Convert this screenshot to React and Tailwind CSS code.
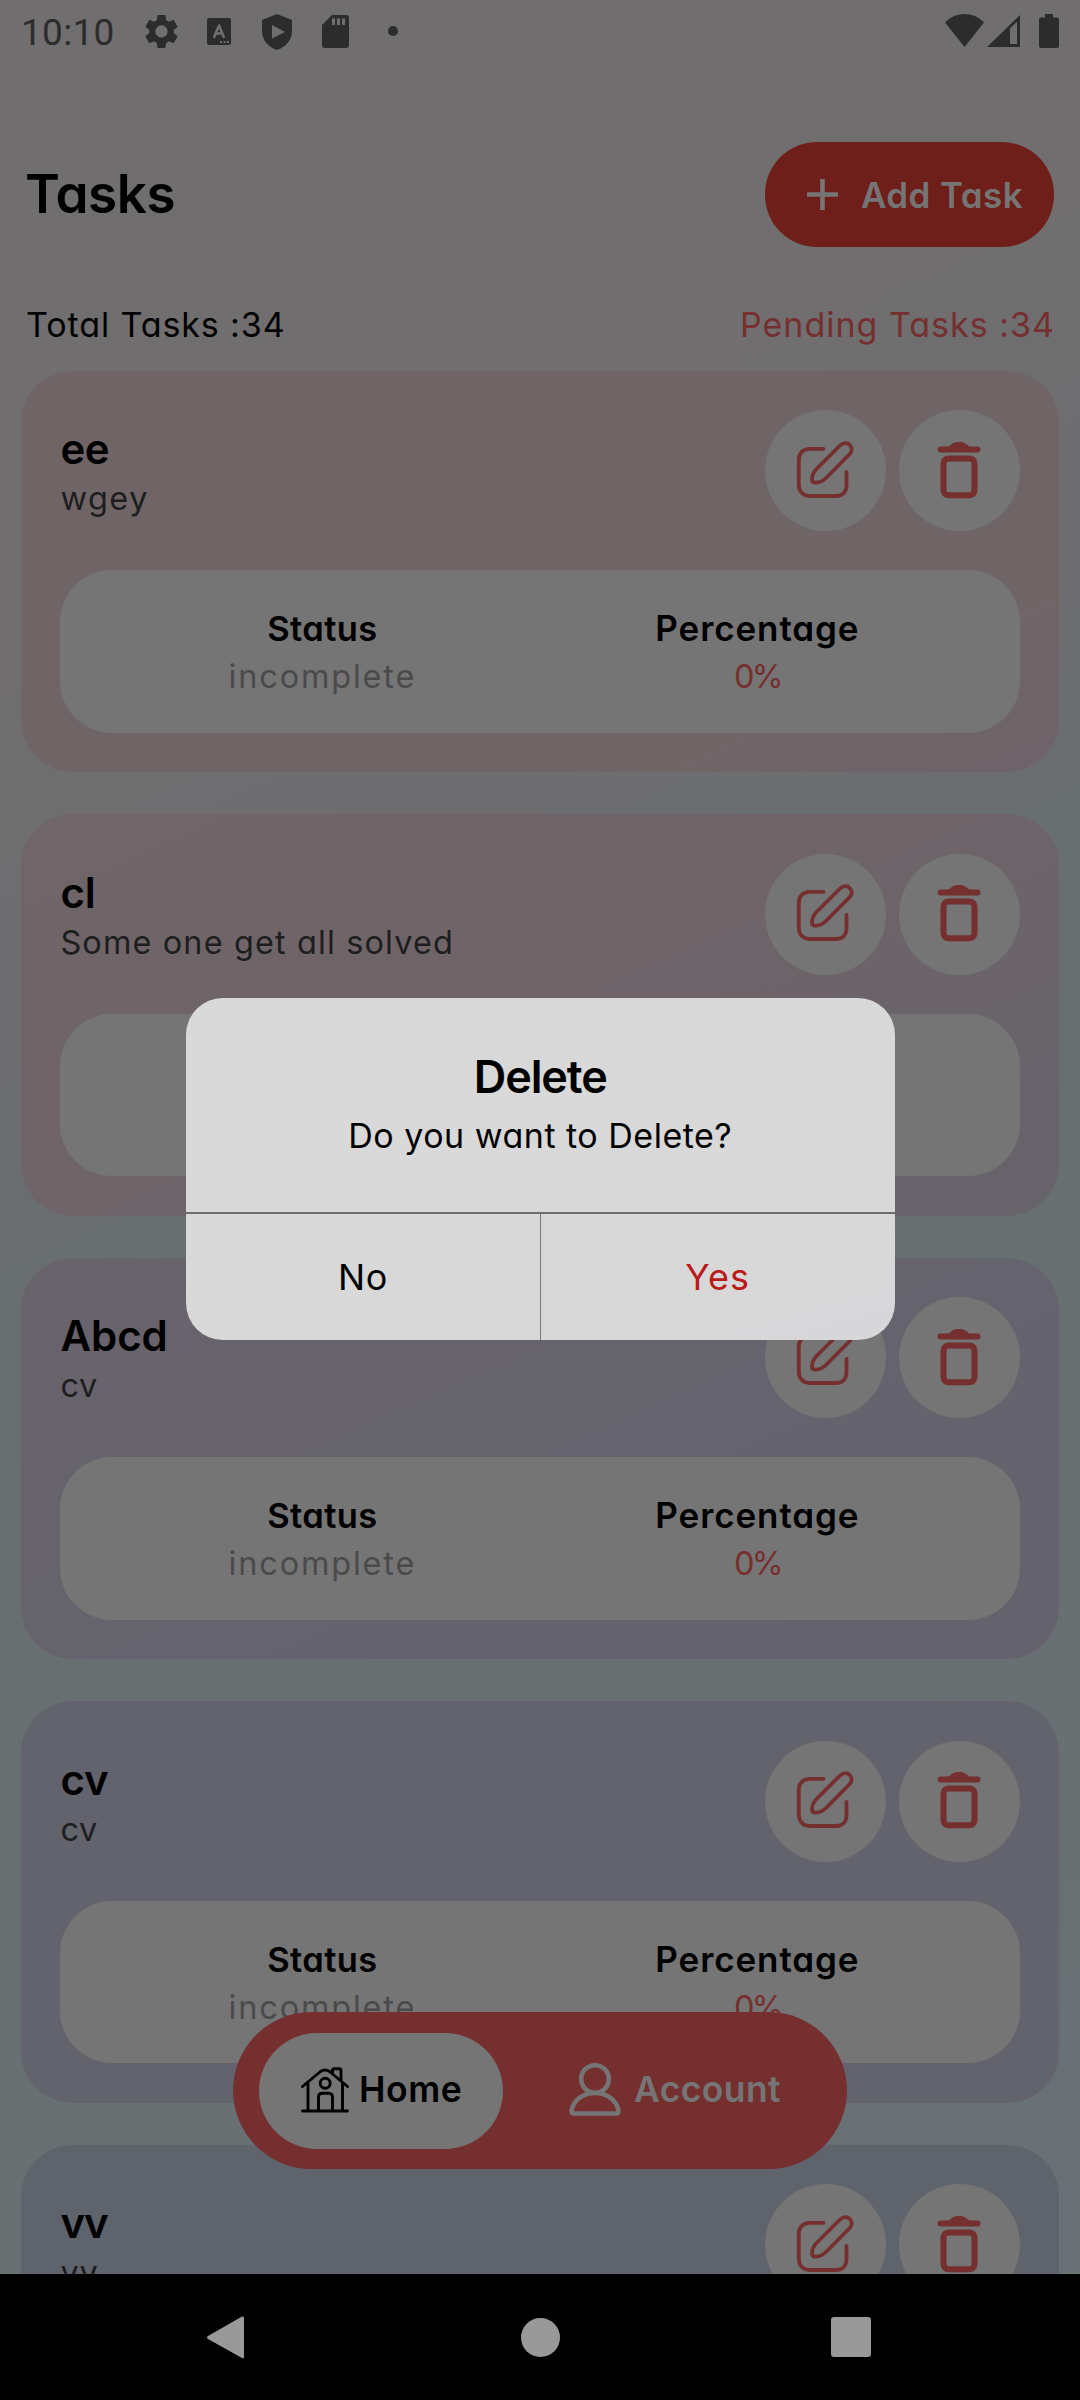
const INTER = "font-[Inter,sans-serif] [font-feature-settings:'cv11'] font-[370]";

const tasks = [
  { title: "ee", note: "wgey", bg: "bg-[linear-gradient(156deg,#706566_0%,#706566_75%,#6e6369_100%)]", ts: "tracking-[-0.5px]", ns: "tracking-[1.5px]" },
  { title: "cl", note: "Some one get all solved", bg: "bg-[linear-gradient(156deg,#706568_0%,#6e6469_50%,#69636b_80%,#67636b_100%)]", ts: "tracking-[0px]", ns: "tracking-[1.1px]" },
  { title: "Abcd", note: "cv", bg: "bg-[linear-gradient(156deg,#69636b_0%,#65636d_50%,#64626c_100%)]", ts: "tracking-[0px]", ns: "tracking-[0.8px]" },
  { title: "cv", note: "cv", bg: "bg-[#63636e]", ts: "tracking-[0px]", ns: "tracking-[0.8px]" },
  { title: "vv", note: "vv", bg: "bg-[#5f636c]", ts: "tracking-[-1px]", ns: "tracking-[0.8px]" },
];

function EditIcon() {
  return (
    <svg width="60" height="60" viewBox="0 0 60 60" fill="none" stroke="#752f2f" strokeWidth="3.8" strokeLinecap="round" strokeLinejoin="round">
      <path d="M28.500 8.800H14.500C8 8.800 3.800 13.500 3.800 19.500V45C3.800 51 8 56 14.500 56H41C48 56 51.500 51.500 51.500 45V32" />
      <path d="M44.500 6C48 2.300 52.500 2.600 54.800 5C57.400 7.800 57.200 11.500 54.500 14.300L31.500 37.500C28 41 23.500 43 19.500 42.500C17.700 42.300 17 41.200 17 39.500C17 35.500 18.500 32 21.500 29Z" />
    </svg>
  );
}

function TrashIcon() {
  return (
    <svg width="44" height="58" viewBox="0 0 44 58" fill="none" stroke="#752f2f">
      <path d="M3.500 8.500H40.500" strokeWidth="6" strokeLinecap="round" />
      <path d="M11 6.500C14 3 17 1 22 1S30 3 33 6.500L34 7H10Z" fill="#752f2f" stroke="none" />
      <rect x="6.500" y="17.500" width="31" height="36.800" rx="5" strokeWidth="6" />
    </svg>
  );
}

function TaskCard({ task }) {
  return (
    <div className={`h-[401.6px] shrink-0 rounded-[52px] px-[39.4px] pt-[39.4px] ${task.bg}`}>
      <div className="flex h-[121px] items-start justify-between">
        <div className="pt-[14px]">
          <div className={`h-[50px] text-[42px] leading-[50px] font-semibold text-black ${task.ts}`}>{task.title}</div>
          <div className={`mt-[2px] h-[46px] text-[32.5px] leading-[46px] text-[#1e1e1e] ${task.ns}`}>{task.note}</div>
        </div>
        <div className="flex gap-[13px]">
          <div className="flex size-[121px] items-center justify-center rounded-full bg-[#757575] pb-[2px]"><EditIcon /></div>
          <div className="flex size-[121px] items-center justify-center rounded-full bg-[#757575] pb-[2px]"><TrashIcon /></div>
        </div>
      </div>
      <div className="mt-[39px] flex h-[162.7px] rounded-[52px] bg-[#757575] pt-[34px]">
        <div className="ml-[142px] w-[240px] text-center">
          <div className="h-[49px] text-[34.5px] leading-[49px] font-semibold tracking-[0.4px] text-black">Status</div>
          <div className="h-[46px] text-[32.5px] leading-[48px] tracking-[1.8px] text-[#4a4a4a]">incomplete</div>
        </div>
        <div className="ml-[195px] w-[240px] text-center">
          <div className="h-[49px] text-[35px] leading-[49px] font-semibold tracking-[0.9px] text-black">Percentage</div>
          <div className="h-[46px] text-[32.5px] leading-[48px] tracking-[-2.8px] text-[#752f2f]">0%</div>
        </div>
      </div>
    </div>
  );
}

function StatusBar() {
  return (
    <div className="flex h-[63px] shrink-0 items-start justify-between px-[21px] text-[#2c2c2c]">
      <div className="flex items-start">
        <span className="mt-[11px] w-[119.5px] font-[Roboto,sans-serif] text-[37px] leading-[44px] tracking-[0.3px]">10:10</span>
        <svg className="mt-[11px]" width="41" height="41" viewBox="0 0 24 24" fill="currentColor">
          <path d="M19.140 12.940c.04-.3.060-.610.060-.940s-.020-.640-.070-.940l2.030-1.580a.49.49 0 0 0 .120-.610l-1.920-3.320a.49.49 0 0 0-.590-.220l-2.390.960c-.5-.380-1.030-.7-1.620-.940l-.360-2.540a.48.48 0 0 0-.480-.410h-3.840a.47.47 0 0 0-.470.410l-.360 2.540c-.590.240-1.130.570-1.620.940l-2.390-.960a.48.48 0 0 0-.590.220L2.740 8.870a.47.47 0 0 0 .120.610l2.030 1.580c-.05.300-.09.630-.09.940s.02.640.07.940l-2.030 1.580a.49.49 0 0 0-.120.610l1.920 3.320c.12.220.37.290.59.220l2.390-.96c.5.380 1.030.7 1.620.94l.36 2.540c.05.240.24.410.48.410h3.840c.24 0 .44-.17.47-.41l.36-2.540c.59-.24 1.130-.56 1.620-.94l2.390.96c.22.08.47 0 .59-.22l1.920-3.320a.47.47 0 0 0-.12-.61zM12 15.600a3.600 3.600 0 1 1 0-7.200 3.600 3.600 0 0 1 0 7.200z" />
        </svg>
        <svg className="mt-[18px] ml-[25.5px]" width="24" height="27" viewBox="0 0 24 27" fill="none">
          <rect width="24" height="27" rx="2" fill="#2c2c2c" />
          <path d="M7.300 18.800L12 7.500L16.700 18.800M8.500 15.500H15.500" stroke="#706e6f" strokeWidth="2.600" strokeLinecap="round" strokeLinejoin="round" />
          <path d="M13 24H15M16.500 24H18.500M20 24H22" stroke="#706e6f" strokeWidth="1.800" />
        </svg>
        <svg className="mt-[14px] ml-[31px]" width="30" height="36" viewBox="0 0 30 36" fill="currentColor">
          <path fillRule="evenodd" d="M15 0L30 6V17C30 26 24 33 15 36C6 33 0 26 0 17V6ZM10 11V24.500L23 18Z" />
        </svg>
        <svg className="mt-[15px] ml-[30px]" width="27" height="33" viewBox="0 0 27 33" fill="currentColor">
          <path fillRule="evenodd" d="M10 0H24Q27 0 27 3V30Q27 33 24 33H3Q0 33 0 30V10ZM10 3.500V10H13V3.500ZM15 3.500V10H18V3.500ZM20 3.500V10H23V3.500Z" />
        </svg>
        <span className="mt-[26px] ml-[39px] size-[10px] rounded-full bg-[#2c2c2c]" />
      </div>
      <div className="flex items-start pt-[14px]">
        <svg width="39" height="33" viewBox="0 0 39 33" fill="currentColor"><path d="M0 8.500C11 -2.800 28 -2.800 39 8.500L19.500 33Z" /></svg>
        <svg className="ml-[3px]" width="33" height="33" viewBox="0 0 33 33" fill="currentColor"><path fillRule="evenodd" d="M0 33L33 1V33ZM23 14.500V30H30V7.700Z" /></svg>
        <svg className="ml-[19px]" width="20" height="34" viewBox="0 0 20 34" fill="currentColor"><path d="M6 0H14V3.500H18Q20 3.500 20 5.500V32Q20 34 18 34H2Q0 34 0 32V5.500Q0 3.500 2 3.500H6Z" /></svg>
      </div>
    </div>
  );
}

function Header() {
  return (
    <>
      <div className="mt-[79px] flex h-[105px] shrink-0 items-center justify-between pr-[26px] pl-[25px]">
        <h1 className="pb-[2px] text-[53px] leading-[64px] font-semibold tracking-[-0.4px] text-black">Tasks</h1>
        <div className="flex h-[105px] w-[289px] items-center rounded-[52px] bg-[#6f1f19] pl-[41px] text-[#757575]">
          <svg width="33" height="33" viewBox="0 0 33 33" stroke="currentColor" strokeWidth="4.600"><path d="M16.500 1V32M1 16.500H32" /></svg>
          <span className="ml-[22px] text-[35px] leading-[44px] font-semibold tracking-[0.4px]">Add Task</span>
        </div>
      </div>
      <div className="mt-[53px] flex h-[50px] shrink-0 items-center justify-between pr-[25px] pl-[26px] text-[34px] leading-[50px]">
        <span className="tracking-[0.9px] text-black">Total Tasks :34</span>
        <span className="tracking-[1px] text-[#752f2f]">Pending Tasks :34</span>
      </div>
    </>
  );
}

function TabBar() {
  return (
    <div className="absolute top-[2012px] left-[233px] flex h-[157px] w-[614px] items-center rounded-full bg-[#752f2f] pl-[26px]">
      <div className="flex h-[116px] w-[244px] items-center rounded-full bg-[#757575] pb-px pl-[42px]">
        <svg width="48" height="46" viewBox="0 0 48 46" fill="none" stroke="#000" strokeWidth="2.900" strokeLinecap="round" strokeLinejoin="round">
          <path d="M1.500 19.500L19.500 4.500Q24 1.500 28.500 4.500L46.500 19.500" />
          <path d="M7 17V43M41.500 17V43M1.500 44H46.500M31.500 6V3.500Q31.500 1.700 33.500 1.700H38Q40 1.700 40 3.500V13" />
          <circle cx="24.200" cy="16.300" r="5" />
          <path d="M17.500 43V30Q17.500 26.300 21.500 26.300H27Q31.500 26.300 31.500 30V43" />
        </svg>
        <span className="ml-[10px] text-[35.5px] leading-[44px] font-semibold tracking-[0.6px] text-black">Home</span>
      </div>
      <svg className="mb-[4px] ml-[65px]" width="54" height="54" viewBox="0 0 54 54" fill="none" stroke="#757575" strokeWidth="4.600" strokeLinejoin="round">
        <circle cx="27" cy="17" r="13.800" />
        <path d="M27 31C14 31 5 39 3.500 49Q3.300 51.500 6 51.500H48Q50.700 51.500 50.500 49C49 39 40 31 27 31Z" />
      </svg>
      <span className="mb-px ml-[12px] text-[35.5px] leading-[44px] font-semibold tracking-[0.4px] text-[#757575]">Account</span>
    </div>
  );
}

function DeleteDialog() {
  return (
    <div className="absolute top-[997.5px] left-[186px] flex h-[342px] w-[708.5px] flex-col overflow-hidden rounded-[37px] bg-[linear-gradient(165deg,#d9d9d9_0%,#d8d8d8_70%,#d7d7da_100%)] text-center text-black">
      <div className="h-[216px] shrink-0 border-b-2 border-[#6e6c6e] pt-[53px]">
        <div className="text-[45px] leading-[52px] font-semibold tracking-[-1.1px]">Delete</div>
        <div className="mt-[8px] text-[34px] leading-[50px] tracking-[0.5px]">Do you want to Delete?</div>
      </div>
      <div className="flex flex-1 text-[36px] leading-[127px]">
        <div className="flex-1 tracking-[0.5px]">No</div>
        <div className="w-px bg-[#77757a]" />
        <div className="flex-1 tracking-[1px] text-[#bb1a1a]">Yes</div>
      </div>
    </div>
  );
}

export default function App() {
  return (
    <div className={`${INTER} relative flex h-[2400px] w-[1080px] flex-col overflow-hidden bg-[linear-gradient(155.8deg,#706e6f_0%,#706e6f_24%,#6d6d70_36%,#696e70_44%,#686f71_55%,#687174_100%)]`}>
      <StatusBar />
      <Header />
      <div className="mt-[20.7px] flex min-h-0 flex-1 flex-col gap-[41.9px] overflow-hidden px-[21px]">
        {tasks.map((t) => <TaskCard key={t.title} task={t} />)}
      </div>
      <div className="flex h-[126px] shrink-0 items-center bg-black">
        <svg className="ml-[206px]" width="39" height="43" viewBox="0 0 39 43" fill="#999"><path d="M36 .5Q38 0 38 2V41Q38 43 36 42L2 23Q0 21.500 2 20Z" /></svg>
        <div className="ml-[275.5px] size-[39px] rounded-full bg-[#999]" />
        <div className="ml-[271.5px] size-[40px] rounded-[3px] bg-[#999]" />
      </div>
      <TabBar />
      <DeleteDialog />
    </div>
  );
}
